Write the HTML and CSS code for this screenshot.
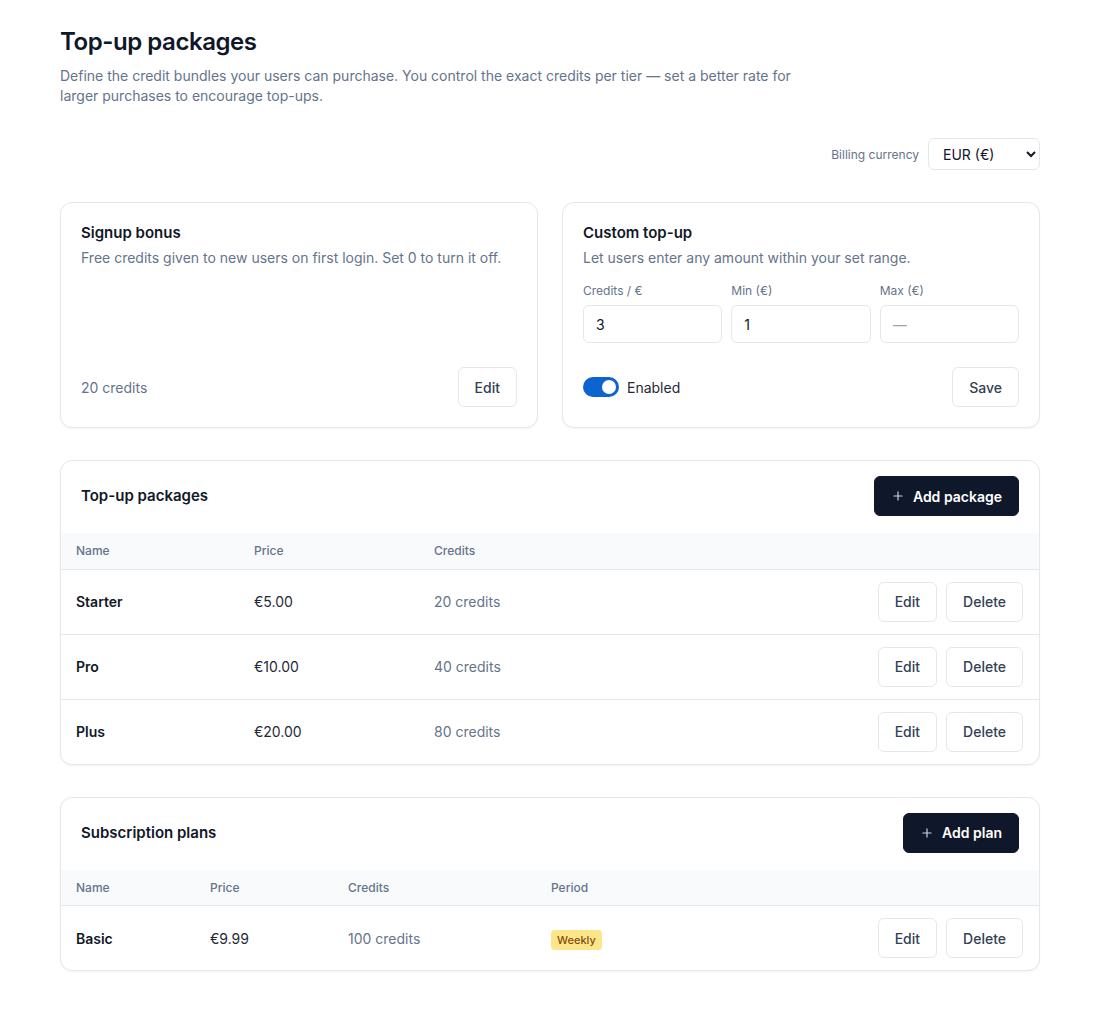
FILE: index.html
```html
<!DOCTYPE html>
<html lang="en">
<head>
    <meta charset="UTF-8">
    <meta name="viewport" content="width=device-width, initial-scale=1.0">
    <title>Top-up packages</title>
    <link rel="stylesheet" href="styles.css">
</head>
<body>
    <div class="page">
        <header class="page-header">
            <h1>Top-up packages</h1>
            <p>Define the credit bundles your users can purchase. You control the exact credits per tier — set a better rate for larger purchases to encourage top-ups.</p>
        </header>

        <div class="currency-row">
            <label for="currency">Billing currency</label>
            <select id="currency" class="currency-select">
                <option>EUR (€)</option>
                <option>USD ($)</option>
                <option>GBP (£)</option>
            </select>
        </div>

        <div class="settings-grid">
            <div class="card settings-card">
                <div>
                    <h2>Signup bonus</h2>
                    <p class="card-desc">Free credits given to new users on first login. Set 0 to turn it off.</p>
                </div>
                <div class="card-footer">
                    <span class="muted">20 credits</span>
                    <button class="btn">Edit</button>
                </div>
            </div>

            <div class="card settings-card">
                <div>
                    <h2>Custom top-up</h2>
                    <p class="card-desc">Let users enter any amount within your set range.</p>
                    <div class="field-row">
                        <div class="field">
                            <label for="rate">Credits / €</label>
                            <input type="text" id="rate" value="3">
                        </div>
                        <div class="field">
                            <label for="min">Min (€)</label>
                            <input type="text" id="min" value="1">
                        </div>
                        <div class="field">
                            <label for="max">Max (€)</label>
                            <input type="text" id="max" placeholder="—">
                        </div>
                    </div>
                </div>
                <div class="card-footer">
                    <label class="toggle">
                        <input type="checkbox" checked>
                        <span class="toggle-track"></span>
                        <span>Enabled</span>
                    </label>
                    <button class="btn">Save</button>
                </div>
            </div>
        </div>

        <div class="card table-card">
            <div class="table-header">
                <h2>Top-up packages</h2>
                <button class="btn btn-dark">
                    <svg width="14" height="14" viewBox="0 0 24 24" fill="none" stroke="currentColor" stroke-width="2" stroke-linecap="round"><path d="M12 5v14M5 12h14"/></svg>
                    Add package
                </button>
            </div>
            <table class="data-table packages">
                <colgroup>
                    <col class="col-name">
                    <col class="col-price">
                    <col>
                    <col class="col-actions">
                </colgroup>
                <thead>
                    <tr><th>Name</th><th>Price</th><th>Credits</th><th></th></tr>
                </thead>
                <tbody>
                    <tr>
                        <td class="name">Starter</td>
                        <td>€5.00</td>
                        <td class="muted">20 credits</td>
                        <td class="actions"><button class="btn">Edit</button><button class="btn">Delete</button></td>
                    </tr>
                    <tr>
                        <td class="name">Pro</td>
                        <td>€10.00</td>
                        <td class="muted">40 credits</td>
                        <td class="actions"><button class="btn">Edit</button><button class="btn">Delete</button></td>
                    </tr>
                    <tr>
                        <td class="name">Plus</td>
                        <td>€20.00</td>
                        <td class="muted">80 credits</td>
                        <td class="actions"><button class="btn">Edit</button><button class="btn">Delete</button></td>
                    </tr>
                </tbody>
            </table>
        </div>

        <div class="card table-card">
            <div class="table-header">
                <h2>Subscription plans</h2>
                <button class="btn btn-dark">
                    <svg width="14" height="14" viewBox="0 0 24 24" fill="none" stroke="currentColor" stroke-width="2" stroke-linecap="round"><path d="M12 5v14M5 12h14"/></svg>
                    Add plan
                </button>
            </div>
            <table class="data-table plans">
                <colgroup>
                    <col class="col-name">
                    <col class="col-price">
                    <col class="col-credits">
                    <col>
                    <col class="col-actions">
                </colgroup>
                <thead>
                    <tr><th>Name</th><th>Price</th><th>Credits</th><th>Period</th><th></th></tr>
                </thead>
                <tbody>
                    <tr>
                        <td class="name">Basic</td>
                        <td>€9.99</td>
                        <td class="muted">100 credits</td>
                        <td><span class="badge">Weekly</span></td>
                        <td class="actions"><button class="btn">Edit</button><button class="btn">Delete</button></td>
                    </tr>
                </tbody>
            </table>
        </div>
    </div>
</body>
</html>
```

FILE: styles.css
```css
* { margin: 0; padding: 0; box-sizing: border-box; }

body {
    font-family: Inter, "Noto Sans", sans-serif;
    background: #ffffff;
    color: #111827;
    font-size: 14px;
}

.page {
    width: 980px;
    margin-left: 60px;
    padding: 26px 0 40px;
    display: flex;
    flex-direction: column;
    gap: 32px;
}

.page-header h1 {
    font-size: 24px;
    line-height: 32px;
    font-weight: 600;
    color: #0f172a;
    letter-spacing: -0.45px;
    margin-bottom: 8px;
}

.page-header p {
    max-width: 760px;
    font-size: 14px;
    line-height: 20px;
    color: #64748b;
}

.currency-row {
    display: flex;
    justify-content: flex-end;
    align-items: center;
    gap: 9px;
}

.currency-row label {
    font-size: 12px;
    color: #64748b;
}

.currency-select {
    width: 112px;
    height: 32px;
    padding: 0 8px 0 10px;
    border: 1px solid #e5e7eb;
    border-radius: 6px;
    background: #fff;
    font-family: inherit;
    font-size: 14px;
    color: #111827;
}

.card {
    border: 1px solid #e5e7eb;
    border-radius: 12px;
    background: #fff;
    box-shadow: 0 1px 2px rgba(15, 23, 42, 0.05);
}

.card h2 {
    font-size: 15px;
    line-height: 20px;
    font-weight: 600;
    color: #111827;
}

.settings-grid {
    display: grid;
    grid-template-columns: 1fr 1fr;
    gap: 24px;
}

.settings-card {
    padding: 20px 20px 20px;
    display: flex;
    flex-direction: column;
    justify-content: space-between;
}

.card-desc {
    margin-top: 5px;
    font-size: 14px;
    line-height: 20px;
    color: #64748b;
}

.card-footer {
    display: flex;
    justify-content: space-between;
    align-items: center;
    margin-top: 24px;
}

.muted {
    color: #64748b;
}

.field-row {
    display: grid;
    grid-template-columns: repeat(3, 1fr);
    gap: 9px;
    margin-top: 15px;
}

.field label {
    display: block;
    font-size: 12px;
    line-height: 16px;
    color: #64748b;
    margin-bottom: 6px;
}

.field input {
    width: 100%;
    height: 38px;
    padding: 0 12px;
    border: 1px solid #e5e7eb;
    border-radius: 6px;
    font-family: inherit;
    font-size: 14px;
    color: #111827;
}

.field input::placeholder {
    color: #9ca3af;
}

.toggle {
    display: flex;
    align-items: center;
    gap: 8px;
    font-size: 14px;
    color: #1f2937;
    cursor: pointer;
}

.toggle input {
    display: none;
}

.toggle-track {
    width: 36px;
    height: 20px;
    border-radius: 10px;
    background: #d1d5db;
    position: relative;
}

.toggle-track::after {
    content: "";
    position: absolute;
    top: 3px;
    left: 3px;
    width: 14px;
    height: 14px;
    border-radius: 50%;
    background: #fff;
}

.toggle input:checked + .toggle-track {
    background: #0b64d0;
}

.toggle input:checked + .toggle-track::after {
    left: 19px;
}

.btn {
    height: 40px;
    padding: 0 16px;
    border: 1px solid #e5e7eb;
    border-radius: 6px;
    background: #fff;
    font-family: inherit;
    font-size: 14px;
    font-weight: 500;
    color: #334155;
    cursor: pointer;
}

.btn:hover {
    background: #f9fafb;
}

.btn-dark {
    display: inline-flex;
    align-items: center;
    gap: 8px;
    padding: 0 16px;
    background: #0f172a;
    border-color: #0f172a;
    color: #fff;
    font-weight: 600;
}

.btn-dark svg {
    color: #cbd5e1;
}

.btn-dark:hover {
    background: #1e293b;
}

.table-header {
    display: flex;
    justify-content: space-between;
    align-items: center;
    padding: 15px 20px 17px;
}

.data-table {
    width: 100%;
    border-collapse: collapse;
    table-layout: fixed;
}

.data-table th {
    height: 36px;
    padding: 0 15px;
    background: #f8fafc;
    text-align: left;
    font-size: 12px;
    font-weight: 500;
    color: #64748b;
    border-bottom: 1px solid #e5e7eb;
}

.data-table td {
    padding: 12px 15px;
    font-size: 14px;
    color: #1f2937;
    border-top: 1px solid #e5e7eb;
}

.data-table tbody tr:first-child td {
    border-top: none;
}

.data-table td.name {
    font-weight: 600;
    color: #111827;
}

.data-table td.muted {
    color: #64748b;
}

.data-table .actions {
    text-align: right;
    padding-right: 16px;
}

.data-table .actions .btn {
    margin-left: 9px;
}

.packages .col-name { width: 178px; }
.packages .col-price { width: 180px; }
.packages .col-actions { width: 200px; }

.plans .col-name { width: 134px; }
.plans .col-price { width: 138px; }
.plans .col-credits { width: 203px; }
.plans .col-actions { width: 200px; }

.badge {
    display: inline-block;
    position: relative;
    top: 2px;
    padding: 0 6px;
    height: 20px;
    line-height: 20px;
    border-radius: 4px;
    background: #fde68a;
    color: #854d0e;
    font-size: 11px;
    font-weight: 500;
}
```
